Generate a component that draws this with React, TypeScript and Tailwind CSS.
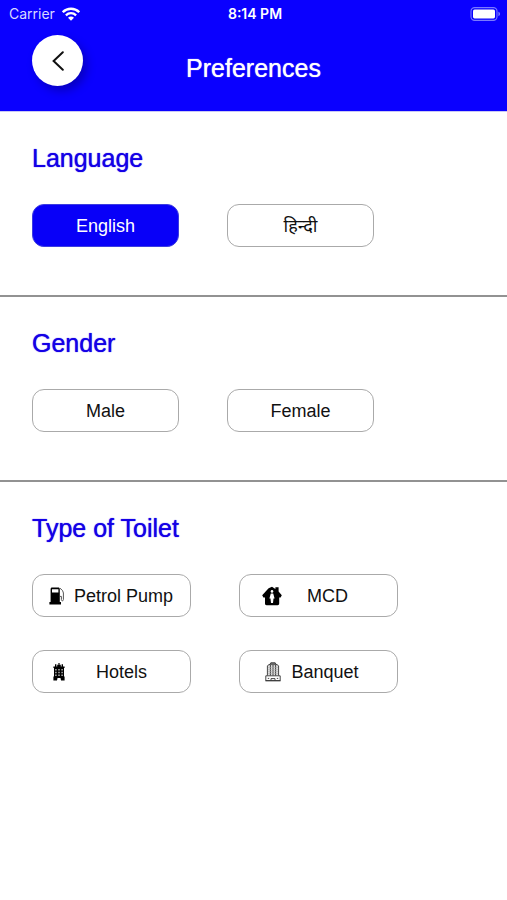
import { useState } from 'react'
import type { ReactNode } from 'react'
import clsx from 'clsx'

function WifiIcon() {
  return (
    <svg viewBox="0 0 18 14" className="h-[14px] w-[18px]" fill="none" stroke="white" strokeWidth="2.3">
      <path d="M0.8 5.2C5.4 0.6 12.6 0.6 17.2 5.2" />
      <path d="M3.9 8.3C6.8 5.5 11.2 5.5 14.1 8.3" />
      <path d="M9 13.8L6 10.8C7.7 9.2 10.3 9.2 12 10.8Z" fill="white" stroke="none" />
    </svg>
  )
}

function BatteryIcon() {
  return (
    <svg viewBox="0 0 31 14" className="h-[14px] w-[31px]" fill="none">
      <rect x="1" y="0.6" width="26" height="12.8" rx="3.6" stroke="#7a7aff" strokeWidth="1.1" />
      <rect x="3" y="2.6" width="22" height="8.8" rx="1.6" fill="white" />
      <path d="M28.4 4.8C30.6 5.5 30.6 8.5 28.4 9.2Z" fill="#7a7aff" />
    </svg>
  )
}

function PumpIcon() {
  return (
    <svg viewBox="0 0 16 18" className="h-[18px] w-4">
      <path fill="#000" fillRule="evenodd" d="M1.6 2.2C1.6 1.2 2.2 0.5 3.1 0.5H9.3C10.3 0.5 10.8 1.2 10.8 2.2V15H12V17.4H0.4V15H1.6ZM3 2.2V5.4H9.4V2.2Z" />
      <path fill="none" stroke="#555" strokeWidth="1" d="M11 1.2L13.6 3.6L14.4 6V12.6C14.4 14.2 12.4 14.2 12.4 12.6V9.4H11" />
    </svg>
  )
}

function HouseIcon() {
  return (
    <svg viewBox="0 0 20 20" className="size-5">
      <path fill="#000" d="M10 0.8L13.4 3V1.2H16.6V5.6L19.8 9.2L18.6 11.6H17.2V17.6C17.2 18.6 16.6 19.2 15.6 19.2H4.6C3.6 19.2 3 18.6 3 17.6V11.6H1.4L0.2 9.2L6.6 2.2Z" />
      <circle cx="10" cy="5.4" r="1.3" fill="#fff" />
      <path fill="#fff" d="M8.8 7.4H11.2L12.6 12.4H11.5L11 17H9L8.5 12.4H7.4Z" />
    </svg>
  )
}

function HotelIcon() {
  return (
    <svg viewBox="0 0 12 18" className="h-[18px] w-3">
      <path fill="#000" d="M1 4.4H11V16.6H7.6V14.6H4.4V16.6H1ZM0.4 3.4H11.6V5H0.4ZM0.4 13.6H11.6V17.6H8V15H4V17.6H0.4ZM5.2 0.2H6.8V1.4H5.2ZM2 1.2H3.4V3.6H2ZM8.6 1.2H10V3.6H8.6ZM4.2 1.8H7.8V3.6H4.2Z" />
      <path fill="#bbb" d="M2.2 6H3.6V7.4H2.2ZM5.3 6H6.7V7.4H5.3ZM8.4 6H9.8V7.4H8.4ZM2.2 8.8H3.6V10.2H2.2ZM5.3 8.8H6.7V10.2H5.3ZM8.4 8.8H9.8V10.2H8.4ZM2.2 11.6H3.6V13H2.2ZM5.3 11.6H6.7V13H5.3ZM8.4 11.6H9.8V13H8.4Z" />
    </svg>
  )
}

function BanquetIcon() {
  return (
    <svg viewBox="0 0 16 20" className="h-5 w-4" fill="none" stroke="#333" strokeWidth="0.9">
      <path fill="#ddd" d="M2.4 13.6V3.8L4 2.6H12L13.6 3.8V13.6" />
      <path fill="#777" d="M4.8 2.6L5.8 0.8H10.2L11.2 2.6" />
      <path d="M5.4 3V13.6M8 3V13.6M10.6 3V13.6" />
      <path stroke="#aaa" strokeWidth="0.5" d="M3 5.5H13M3 7.5H13M3 9.5H13M3 11.5H13" />
      <path fill="#fff" d="M0.8 13.8H15.2V18.6H0.8Z" />
      <path d="M6 18.4V16.6H10V18.4M2.8 16.4H4.2M11.8 16.4H13.2M0.4 18.8H15.6" />
    </svg>
  )
}

interface OptionProps {
  label: string
  selected: boolean
  onClick: () => void
  icon?: ReactNode
  className: string
}

function Option({ label, selected, onClick, icon, className }: OptionProps) {
  return (
    <button
      type="button"
      aria-pressed={selected}
      onClick={onClick}
      className={clsx(
        'flex h-[43px] items-center rounded-xl border text-lg',
        selected ? 'border-[#3c3ce0] bg-[#0800f8] text-white' : 'border-[#aaa] bg-white text-[#111]',
        className,
      )}
    >
      {icon}
      <span className="flex-1 text-center">{label}</span>
    </button>
  )
}

function Section({ title, children }: { title: string; children: ReactNode }) {
  return (
    <section className="border-b-2 border-[#929292] px-8 pt-8 pb-12 last:border-b-0">
      <h2 className="mb-8 text-[25px] leading-7 text-[#1400e6] text-shadow-[0_0_1px_#1400e6]">{title}</h2>
      {children}
    </section>
  )
}

const toilets = [
  { label: 'Petrol Pump', icon: <PumpIcon />, padding: 'pl-4 pr-2' },
  { label: 'MCD', icon: <HouseIcon />, padding: 'pl-[22px] pr-6' },
  { label: 'Hotels', icon: <HotelIcon />, padding: 'pl-5 pr-3' },
  { label: 'Banquet', icon: <BanquetIcon />, padding: 'pl-[25px] pr-7' },
]

export default function App() {
  const [language, setLanguage] = useState('English')
  const [gender, setGender] = useState('')
  const [toilet, setToilet] = useState('')

  return (
    <div className="min-h-screen bg-white font-['Liberation_Sans','Noto_Sans_Devanagari','Noto_Sans',sans-serif]">
      <header className="h-28 border-b border-[#c8c8f4] bg-[#0a00ff] text-white">
        {/* Status bar */}
        <div className="grid h-[27px] grid-cols-[1fr_auto_1fr] items-center pr-[6px] pl-[9px] font-['Inter',sans-serif] text-sm">
          <span className="flex items-center gap-[7px] text-[#d8d8ff]">
            Carrier
            <WifiIcon />
          </span>
          <span className="text-center font-semibold">8:14 PM</span>
          <span className="flex justify-end">
            <BatteryIcon />
          </span>
        </div>

        <div className="grid grid-cols-[1fr_auto_1fr] items-center px-8 pt-2">
          <button
            type="button"
            aria-label="Back"
            className="flex size-[51px] items-center justify-center rounded-full bg-white shadow-[4px_5px_10px_rgba(0,0,0,0.25)]"
          >
            <svg viewBox="0 0 12 20" className="h-5 w-3" fill="none" stroke="#111" strokeWidth="2">
              <path d="M10.8 1.2L1.6 10L10.8 18.8" strokeLinecap="round" />
            </svg>
          </button>
          <h1 className="pt-[14px] text-[25px] leading-7 text-shadow-[0_0_1px_#fff]">Preferences</h1>
        </div>
      </header>

      <main>
        <Section title="Language">
          <div className="flex gap-12">
            {['English', 'हिन्दी'].map((name) => (
              <Option key={name} label={name} selected={language === name} onClick={() => setLanguage(name)} className="w-[147px]" />
            ))}
          </div>
        </Section>

        <Section title="Gender">
          <div className="flex gap-12">
            {['Male', 'Female'].map((name) => (
              <Option key={name} label={name} selected={gender === name} onClick={() => setGender(name)} className="w-[147px]" />
            ))}
          </div>
        </Section>

        <Section title="Type of Toilet">
          <div className="flex max-w-[368px] flex-wrap gap-x-12 gap-y-[33px]">
            {toilets.map((item) => (
              <Option
                key={item.label}
                label={item.label}
                icon={item.icon}
                selected={toilet === item.label}
                onClick={() => setToilet(item.label)}
                className={clsx('w-[159px]', item.padding)}
              />
            ))}
          </div>
        </Section>
      </main>
    </div>
  )
}
